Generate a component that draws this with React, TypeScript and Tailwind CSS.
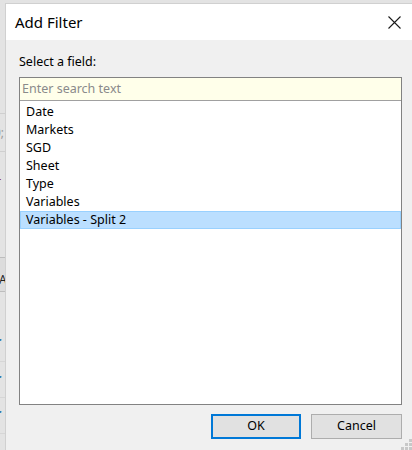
const fields = ["Date", "Markets", "SGD", "Sheet", "Type", "Variables", "Variables - Split 2"]

function CloseIcon() {
  return (
    <svg width="13" height="13" viewBox="0 0 13 13" fill="none" stroke="#1a1a1a" strokeWidth="1.1">
      <path d="M0.5 0.5 L12.5 12.5 M12.5 0.5 L0.5 12.5" />
    </svg>
  )
}

function Grip() {
  const dots = [
    [8, 0],
    [8, 4],
    [4, 4],
    [8, 8],
    [4, 8],
    [0, 8],
  ]
  return (
    <svg width="11" height="11" viewBox="0 0 11 11" className="absolute right-0 bottom-0">
      {dots.map(([x, y]) => (
        <rect key={`${x}-${y}`} x={x} y={y} width="3" height="3" fill="#c8c8c8" />
      ))}
    </svg>
  )
}

// sliver of the app window behind the dialog
function BackdropStrip() {
  return (
    <div className="w-[5px] shrink-0 overflow-hidden bg-[#e3e3e3] text-[12px] leading-[12px]">
      <div className="h-[114px] border-b border-[#cfcfcf]" />
      <div className="h-[13px]" />
      <div className="h-[12px] -ml-[6px] text-[#9a9a9a]">0;</div>
      <div className="h-[13px] border-b border-[#cfcfcf]" />
      <div className="h-[24px]" />
      <div className="h-[12px] -ml-[4px] text-[#8b1a1a]">r</div>
      <div className="h-[69px]" />
      <div className="h-[35px] border-y border-[#bdbdbd] bg-[#dcdcdc] pt-[16px] -ml-[1px] text-[#222]">Ac</div>
      <div className="h-[44px]" />
      <div className="h-[12px] -ml-[4px] font-bold text-[#2a6fa8]">r</div>
      <div className="h-[14px] border-b border-[#d6d6d6]" />
      <div className="h-[11px]" />
      <div className="h-[12px] -ml-[4px] font-bold text-[#2a6fa8]">r</div>
      <div className="h-[13px] border-b border-[#d6d6d6]" />
      <div className="h-[10px]" />
      <div className="h-[12px] -ml-[4px] font-bold text-[#2a6fa8]">r</div>
      <div className="h-[14px] border-b border-[#d6d6d6]" />
    </div>
  )
}

export default function App() {
  return (
    <div
      className="flex h-[450px] w-[412px] overflow-hidden bg-[#e3e3e3]"
      style={{ fontFamily: '"Noto Sans", "Segoe UI", sans-serif' }}
    >
      <BackdropStrip />
      <div className="relative mt-[3px] flex flex-1 flex-col border-l border-t border-[#d0d0d0] bg-[#f0f0f0]">
        <div className="flex h-[36px] items-center justify-between bg-white pl-[9px] pr-[11px]">
          <span className="text-[15px] text-black">Add Filter</span>
          <CloseIcon />
        </div>
        <div className="flex flex-1 flex-col pl-[13px] pr-[10px] pt-[14px] text-[12.5px]">
          <div className="leading-[16px] text-black">Select a field:</div>
          <div className="mt-[7px] flex h-[328px] flex-col border border-[#828282] bg-white">
            <div className="flex h-[23px] items-center border-b border-[#a0a0a0] bg-[#ffffea] px-[2px] text-[#8a8a8a]">
              Enter search text
            </div>
            <ul className="pt-[2px] text-black">
              {fields.map((f, i) => {
                const selected = i === fields.length - 1
                return (
                  <li
                    key={f}
                    className={
                      selected
                        ? "flex h-[18px] items-center border border-[#99d1ff] bg-[#bbdfff] pl-[5px]"
                        : "flex h-[18px] items-center border border-transparent pl-[5px]"
                    }
                  >
                    {f}
                  </li>
                )
              })}
            </ul>
          </div>
          <div className="mt-[9px] flex justify-end gap-[10px]">
            <button className="h-[25px] w-[90px] border-2 border-[#0078d7] bg-[#e1e1e1] text-black">
              OK
            </button>
            <button className="h-[25px] w-[91px] border border-[#adadad] bg-[#e1e1e1] text-black">
              Cancel
            </button>
          </div>
        </div>
        <Grip />
      </div>
    </div>
  )
}
